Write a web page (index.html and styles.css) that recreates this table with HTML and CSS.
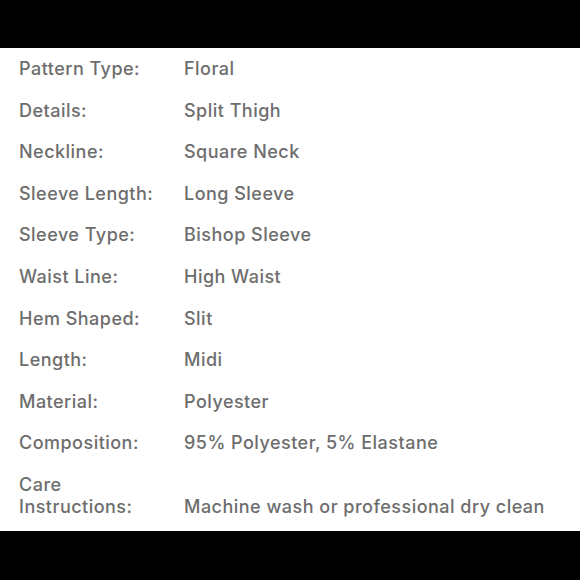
FILE: index.html
```html
<!DOCTYPE html>
<html>
<head>
<meta charset="utf-8">
<link rel="stylesheet" href="styles.css">
</head>
<body>
<div class="bar"></div>
<main class="specs">
  <div class="label">Pattern Type:</div><div class="value">Floral</div>
  <div class="label">Details:</div><div class="value">Split Thigh</div>
  <div class="label">Neckline:</div><div class="value">Square Neck</div>
  <div class="label">Sleeve Length:</div><div class="value">Long Sleeve</div>
  <div class="label">Sleeve Type:</div><div class="value">Bishop Sleeve</div>
  <div class="label">Waist Line:</div><div class="value">High Waist</div>
  <div class="label">Hem Shaped:</div><div class="value">Slit</div>
  <div class="label">Length:</div><div class="value">Midi</div>
  <div class="label">Material:</div><div class="value">Polyester</div>
  <div class="label">Composition:</div><div class="value">95% Polyester, 5% Elastane</div>
  <div class="label">Care<br>Instructions:</div><div class="value">Machine wash or professional dry clean</div>
</main>
<div class="bar bottom"></div>
</body>
</html>
```
FILE: styles.css
```css
html, body {
  margin: 0;
  padding: 0;
  background: #000;
}
body {
  width: 580px;
  height: 580px;
  display: flex;
  flex-direction: column;
  font-family: Inter, "Liberation Sans", sans-serif;
}
.bar {
  height: 48px;
  background: #000;
}
.bar.bottom {
  flex: 1;
}
.specs {
  background: #fff;
  height: 483px;
  box-sizing: border-box;
  padding: 10px 0 0 19px;
  display: grid;
  grid-template-columns: 165px 1fr;
  grid-auto-rows: min-content;
  row-gap: 19.6px;
  align-items: end;
  color: #6d6d6d;
  font-size: 18px;
  line-height: 22px;
  font-weight: 500;
  letter-spacing: 0.48px;
  align-content: start;
}
.label, .value {
  white-space: nowrap;
}
```
